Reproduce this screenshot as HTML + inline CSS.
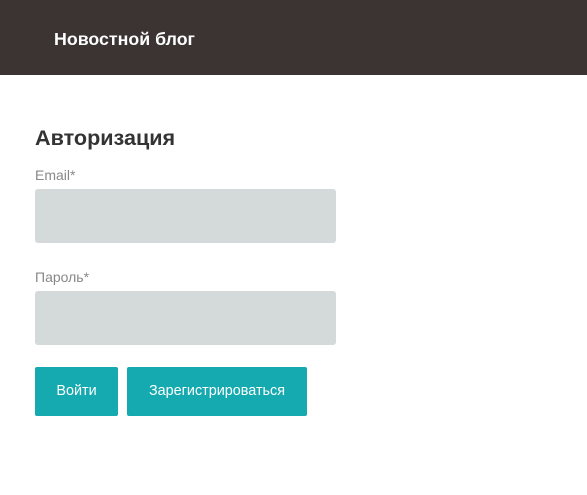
<!DOCTYPE html>
<html><head><meta charset="utf-8"><style>
body{margin:0;width:587px;height:495px;background:#fff;font-family:"Liberation Sans",sans-serif;position:relative;overflow:hidden}
.hdr{position:absolute;left:0;top:0;width:587px;height:75px;background:#3b3433}
.hdr span{position:absolute;left:54px;top:29px;color:#fff;font-weight:bold;font-size:17.8px}
h1{position:absolute;left:35px;top:125px;margin:0;font-size:21.6px;font-weight:bold;color:#333}
.lbl{position:absolute;left:35px;color:#888;font-size:14px}
.inp{position:absolute;left:35px;width:301px;height:54px;background:#d4d9d9;border-radius:3px}
.btn{position:absolute;top:367px;height:49px;background:#14aab0;color:#fff;font-size:14.4px;line-height:49px;text-align:center;border-radius:2px}
</style></head><body>
<div class="hdr"><span>Новостной блог</span></div>
<h1>Авторизация</h1>
<div class="lbl" style="top:167px">Email*</div>
<div class="inp" style="top:189px"></div>
<div class="lbl" style="top:269px">Пароль*</div>
<div class="inp" style="top:291px"></div>
<div class="btn" style="left:35px;width:83px">Войти</div>
<div class="btn" style="left:127px;width:180px">Зарегистрироваться</div>
</body></html>
